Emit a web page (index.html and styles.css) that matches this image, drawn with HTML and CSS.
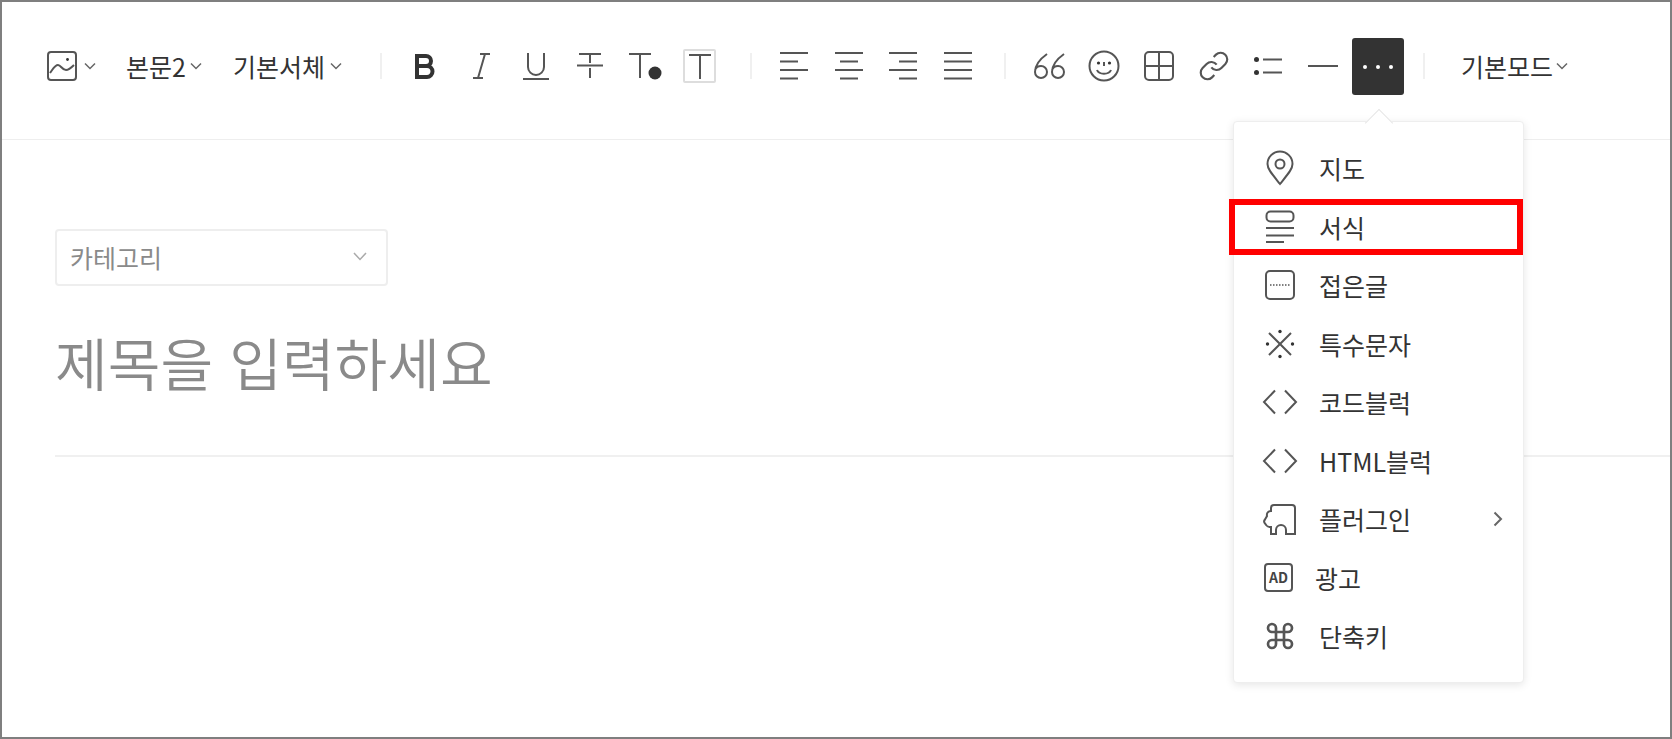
FILE: index.html
```html
<!DOCTYPE html>
<html lang="ko">
<head>
<meta charset="utf-8">
<title>글쓰기</title>
<link rel="stylesheet" href="styles.css">
</head>
<body>
<div class="frame">
  <header class="toolbar">
    <div class="drop drop-image">
      <svg class="ic30" viewBox="0 0 30 30"><rect x="1" y="1" width="28" height="28" rx="3"/><path d="M3 22C6 18 8 14 11 14c3 0 4 5 8 5 3 0 5-2 8-5"/><circle class="solid" cx="20.5" cy="8.5" r="1.4"/></svg>
      <svg class="chev" viewBox="0 0 12 8"><path d="M1 1.5l5 5 5-5"/></svg>
    </div>
    <div class="drop drop-style"><span>본문2</span><svg class="chev" viewBox="0 0 12 8"><path d="M1 1.5l5 5 5-5"/></svg></div>
    <div class="drop drop-font"><span>기본서체</span><svg class="chev" viewBox="0 0 12 8"><path d="M1 1.5l5 5 5-5"/></svg></div>
    <i class="sep sep-1"></i>
    <div class="cell"><svg class="ic30 bold" viewBox="0 0 30 30"><path d="M6 5h9a5 5 0 0 1 0 10H6zM6 15h10a5.5 5.5 0 0 1 0 11H6z"/></svg></div>
    <div class="cell"><svg class="ic30" viewBox="0 0 30 30"><path d="M19 3l-7 24M14 3h10M7 27h10"/></svg></div>
    <div class="cell"><svg class="ic30" viewBox="0 0 30 30"><path d="M7 2v14a8 8 0 0 0 16 0V2M2 28h26"/></svg></div>
    <div class="cell"><svg class="ic30" viewBox="0 0 30 30"><path d="M4 3h22M15 3v9M15 17v10M2 14.500h26"/></svg></div>
    <div class="cell"><svg class="ic34" viewBox="0 0 34 30"><path d="M1 3h22M12 3v24"/><circle class="solid" cx="27" cy="22" r="6.500"/></svg></div>
    <div class="cell"><div class="boxed"><svg class="ic24" viewBox="0 0 24 28"><path d="M1 3h22M12 3v24"/></svg></div></div>
    <i class="sep sep-2"></i>
    <div class="cell"><svg class="ic30" viewBox="0 0 30 30"><path d="M1 2h28M1 10.500h18M1 19h28M1 27.500h18"/></svg></div>
    <div class="cell"><svg class="ic30" viewBox="0 0 30 30"><path d="M1 2h28M6 10.500h18M1 19h28M6 27.500h18"/></svg></div>
    <div class="cell"><svg class="ic30" viewBox="0 0 30 30"><path d="M1 2h28M11 10.500h18M1 19h28M11 27.500h18"/></svg></div>
    <div class="cell"><svg class="ic30" viewBox="0 0 30 30"><path d="M1 2h28M1 10.500h28M1 19h28M1 27.500h28"/></svg></div>
    <i class="sep sep-3"></i>
    <div class="cell"><svg class="ic34" viewBox="0 0 34 30"><path d="M14 3C7 8 2 14 2 21a6 6 0 1 0 6-6c-3 0-5 1.500-6 4M31 3C24 8 19 14 19 21a6 6 0 1 0 6-6c-3 0-5 1.500-6 4"/></svg></div>
    <div class="cell"><svg class="ic32" viewBox="0 0 32 32"><circle cx="16" cy="16" r="14.500"/><circle class="solid" cx="10.500" cy="13" r="1.600"/><circle class="solid" cx="21.500" cy="13" r="1.600"/><path d="M16 12v4M9 20c2 5 12 5 14 0"/></svg></div>
    <div class="cell"><svg class="ic32" viewBox="0 0 32 32"><rect x="2" y="2" width="28" height="28" rx="4"/><path d="M16 2v28M2 16h28"/></svg></div>
    <div class="cell"><svg class="ic32 link" viewBox="0 0 24 24"><path d="M10 13a5 5 0 0 0 7.540.54l3-3a5 5 0 0 0-7.070-7.070l-1.720 1.710"/><path d="M14 11a5 5 0 0 0-7.540-.54l-3 3a5 5 0 0 0 7.070 7.070l1.710-1.710"/></svg></div>
    <div class="cell"><svg class="ic30" viewBox="0 0 30 30"><circle class="solid" cx="3.500" cy="8.500" r="2.500"/><circle class="solid" cx="3.500" cy="21.500" r="2.500"/><path d="M10 8.500h19M10 21.500h19"/></svg></div>
    <div class="cell"><svg class="ic30" viewBox="0 0 30 30"><path d="M0 15h30"/></svg></div>
    <div class="cell"><div class="more"><i></i><i></i><i></i></div></div>
    <i class="sep sep-4"></i>
    <div class="drop drop-mode"><span>기본모드</span><svg class="chev" viewBox="0 0 12 8"><path d="M1 1.500l5 5 5-5"/></svg></div>
  </header>

  <main class="editor">
    <div class="category">
      <span>카테고리</span>
      <svg class="chev-lg" viewBox="0 0 14 9"><path d="M1 1l6 6.500L13 1"/></svg>
    </div>
    <div class="title">제목을 입력하세요</div>
  </main>

  <nav class="menu">
    <div class="menu-item"><span class="mi"><svg class="ic36" viewBox="0 0 36 36"><path d="M18 34C10 24 5.500 19 5.500 14a12.500 12.500 0 0 1 25 0c0 5-4.500 10-12.500 20z"/><circle cx="18" cy="14" r="4.500"/></svg></span><span>지도</span></div>
    <div class="menu-item"><span class="mi"><svg class="ic36" viewBox="0 0 36 36"><rect x="4.500" y="2.500" width="27" height="10" rx="4"/><path d="M4 19h28M4 26.500h28M4 33h18"/></svg></span><span>서식</span></div>
    <div class="menu-item"><span class="mi"><svg class="ic36" viewBox="0 0 36 36"><rect x="4" y="4" width="28" height="28" rx="4"/><path class="thin" d="M8 18h20"/></svg></span><span>접은글</span></div>
    <div class="menu-item"><span class="mi"><svg class="ic36" viewBox="0 0 36 36"><path d="M7 7l22 22M29 7L7 29"/><circle class="solid" cx="18" cy="5.500" r="1.700"/><circle class="solid" cx="18" cy="30.500" r="1.700"/><circle class="solid" cx="5.500" cy="18" r="1.700"/><circle class="solid" cx="30.500" cy="18" r="1.700"/></svg></span><span>특수문자</span></div>
    <div class="menu-item"><span class="mi"><svg class="ic36" viewBox="0 0 36 36"><path d="M13 6.500L2 18l11 11.500M23 6.500L34 18 23 29.500"/></svg></span><span>코드블럭</span></div>
    <div class="menu-item"><span class="mi"><svg class="ic36" viewBox="0 0 36 36"><path d="M13 6.500L2 18l11 11.500M23 6.500L34 18 23 29.500"/></svg></span><span>HTML블럭</span></div>
    <div class="menu-item"><span class="mi"><svg class="ic36" viewBox="0 0 36 36"><path d="M9 10V7a3 3 0 0 1 3-3h18a3 3 0 0 1 3 3v26h-9v-4a5 5 0 0 0-10 0v4H9v-7H7.500a4 4 0 0 1-3-1.500L3 22.500a3 3 0 0 1 0-4L5 15a4 4 0 0 1 4-5z"/></svg></span><span class="grow">플러그인</span><svg class="sub" viewBox="0 0 10 16"><path d="M1.500 1.500L8 8l-6.500 6.500"/></svg></div>
    <div class="menu-item menu-item-ad"><span class="ad">AD</span><span>광고</span></div>
    <div class="menu-item"><span class="mi"><svg class="ic32" viewBox="0 0 24 24"><path d="M18 3a3 3 0 0 0-3 3v12a3 3 0 0 0 3 3 3 3 0 0 0 3-3 3 3 0 0 0-3-3H6a3 3 0 0 0-3 3 3 3 0 0 0 3 3 3 3 0 0 0 3-3V6a3 3 0 0 0-3-3 3 3 0 0 0-3 3 3 3 0 0 0 3 3h12a3 3 0 0 0 3-3 3 3 0 0 0-3-3z"/></svg></span><span>단축키</span></div>
  </nav>
  <div class="menu-arrow"></div>
  <div class="callout"></div>
</div>
</body>
</html>
```
FILE: styles.css
```css
* { box-sizing: border-box; }
html, body { margin: 0; padding: 0; background: #fff; }
body {
  font-family: "Noto Sans CJK KR", "Noto Sans", sans-serif;
  color: #333;
}
svg { display: block; fill: none; stroke: #555; stroke-width: 2; flex: none; overflow: visible; }
svg .solid { fill: #333; stroke: none; }

.frame {
  position: relative;
  width: 1672px;
  height: 739px;
  border: 2px solid #7f7f7f;
  overflow: hidden;
}

/* toolbar */
.toolbar {
  display: flex;
  align-items: center;
  height: 138px;
  padding: 0 0 10px 45px;
  border-bottom: 1px solid #eee;
}
.drop { display: flex; align-items: center; font-size: 25px; line-height: 30px; }
.drop-image { gap: 7px; }
.drop-style { margin-left: 30px; gap: 4px; }
.drop-font { margin-left: 31px; gap: 5px; }
.drop-mode { gap: 3px; }
.chev { width: 12px; height: 8px; stroke: #666; stroke-width: 1.5; }

.cell { width: 54.67px; height: 58px; display: flex; align-items: center; justify-content: center; flex: none; }
.ic24 { width: 24px; height: 28px; }
.ic30 { width: 30px; height: 30px; }
.ic32 { width: 32px; height: 32px; }
.ic34 { width: 34px; height: 30px; }
.ic36 { width: 36px; height: 36px; }
.bold { stroke: #333; stroke-width: 4; }
.link { stroke-width: 1.6; }

.boxed {
  width: 33px;
  height: 34px;
  border: 2px solid #ddd;
  border-radius: 2px;
  display: flex;
  align-items: center;
  justify-content: center;
}
.more {
  width: 52px;
  height: 57px;
  margin-top: 2px;
  background: #333;
  border-radius: 3px;
  display: flex;
  align-items: center;
  justify-content: center;
  gap: 9px;
}
.more i { width: 4px; height: 4px; border-radius: 50%; background: #fff; }

.sep { display: block; width: 2px; height: 26px; background: #f0f0f0; flex: none; }
.sep-1 { margin: 0 17px 0 38px; }
.sep-2 { margin: 0 15px 0 23px; }
.sep-3 { margin: 0 16px 0 19px; }
.sep-4 { margin: 0 36px 0 18px; }

/* editor */
.editor { padding: 89px 0 0 53px; }
.category {
  width: 333px;
  height: 57px;
  border: 2px solid #eee;
  border-radius: 4px;
  display: flex;
  align-items: center;
  justify-content: space-between;
  padding: 0 19px 2px 13px;
  font-size: 25px;
  color: #8a8a8a;
}
.chev-lg { width: 14px; height: 9px; stroke: #aaa; stroke-width: 1.5; }
.title {
  margin-top: 17px;
  padding-bottom: 34px;
  border-bottom: 2px solid #f0f0f0;
  font-size: 57.3px;
  font-weight: 350;
  line-height: 118px;
  color: #8a8a8a;
}

/* more menu */
.menu {
  position: absolute;
  left: 1231px;
  top: 119px;
  width: 291px;
  height: 562px;
  padding: 17px 0 0;
  background: #fff;
  border: 1px solid #eee;
  border-radius: 4px;
  box-shadow: 0 2px 8px rgba(0, 0, 0, .1);
}
.menu-item {
  display: flex;
  align-items: center;
  height: 58.5px;
  padding-left: 27px;
  font-size: 25px;
  color: #333;
}
.mi { width: 38px; display: flex; justify-content: center; margin-right: 20px; }
.grow { flex: 1; }
.sub { width: 10px; height: 16px; margin-right: 20px; stroke: #666; }
.thin { stroke-width: 1.5; stroke-dasharray: 1.5 1.5; }
.menu-item-ad { gap: 22px; }
.ad {
  width: 29px;
  height: 29px;
  border: 2px solid #555;
  border-radius: 4px;
  font-size: 14px;
  font-weight: 700;
  line-height: 25px;
  text-align: center;
  color: #444;
  margin-left: 3px;
}
.menu-arrow {
  position: absolute;
  left: 1367px;
  top: 111px;
  width: 20px;
  height: 20px;
  background: #fff;
  border-left: 1px solid #e6e6e6;
  border-top: 1px solid #e6e6e6;
  transform: rotate(45deg);
}
.callout {
  position: absolute;
  left: 1227px;
  top: 197px;
  width: 294px;
  height: 56px;
  border: 6px solid #f00;
}
```
